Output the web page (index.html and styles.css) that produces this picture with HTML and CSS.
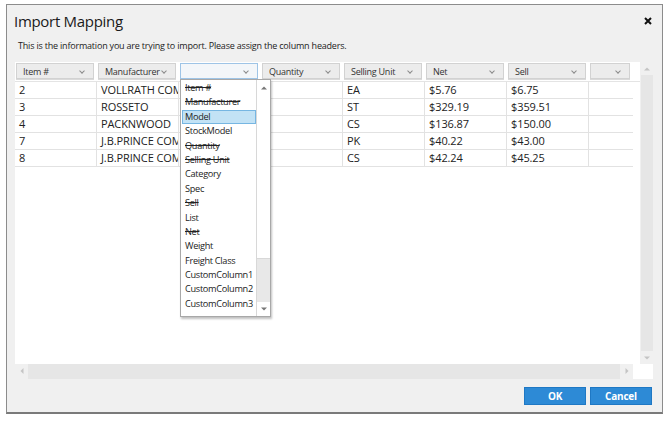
FILE: index.html
```html
<!DOCTYPE html>
<html lang="en">
<head>
    <meta charset="UTF-8">
    <title>Import Mapping</title>
    <link rel="stylesheet" href="styles.css">
</head>
<body>
<div class="dialog">
    <div class="dialog-head">
        <h1 class="dialog-title">Import Mapping</h1>
        <button class="close-btn" aria-label="Close">
            <svg width="8" height="8" viewBox="0 0 8 8"><path d="M1 1L7 7M7 1L1 7" stroke="#111" stroke-width="2"/></svg>
        </button>
    </div>
    <p class="intro">This is the information you are trying to import. Please assign the column headers.</p>

    <div class="grid">
        <div class="grid-body">
            <div class="row head-row">
                <div class="col"><div class="head-cell">Item #<span class="chev"></span></div></div>
                <div class="col"><div class="head-cell">Manufacturer<span class="chev"></span></div></div>
                <div class="col"><div class="head-cell active"><span class="chev"></span></div></div>
                <div class="col"><div class="head-cell">Quantity<span class="chev"></span></div></div>
                <div class="col"><div class="head-cell">Selling Unit<span class="chev"></span></div></div>
                <div class="col"><div class="head-cell">Net<span class="chev"></span></div></div>
                <div class="col"><div class="head-cell">Sell<span class="chev"></span></div></div>
                <div class="col"><div class="head-cell">&nbsp;<span class="chev"></span></div></div>
            </div>
            <div class="row"><div class="cell">2</div><div class="cell">VOLLRATH COMPANY</div><div class="cell"></div><div class="cell"></div><div class="cell">EA</div><div class="cell">$5.76</div><div class="cell">$6.75</div><div class="cell"></div></div>
            <div class="row"><div class="cell">3</div><div class="cell">ROSSETO</div><div class="cell"></div><div class="cell"></div><div class="cell">ST</div><div class="cell">$329.19</div><div class="cell">$359.51</div><div class="cell"></div></div>
            <div class="row"><div class="cell">4</div><div class="cell">PACKNWOOD</div><div class="cell"></div><div class="cell"></div><div class="cell">CS</div><div class="cell">$136.87</div><div class="cell">$150.00</div><div class="cell"></div></div>
            <div class="row"><div class="cell">7</div><div class="cell">J.B.PRINCE COMPANY</div><div class="cell"></div><div class="cell"></div><div class="cell">PK</div><div class="cell">$40.22</div><div class="cell">$43.00</div><div class="cell"></div></div>
            <div class="row"><div class="cell">8</div><div class="cell">J.B.PRINCE COMPANY</div><div class="cell"></div><div class="cell"></div><div class="cell">CS</div><div class="cell">$42.24</div><div class="cell">$45.25</div><div class="cell"></div></div>

            <!-- open column picker -->
            <div class="picker">
                <ul class="picker-list">
                    <li class="used">Item #</li>
                    <li class="used">Manufacturer</li>
                    <li class="selected">Model</li>
                    <li>StockModel</li>
                    <li class="used">Quantity</li>
                    <li class="used">Selling Unit</li>
                    <li>Category</li>
                    <li>Spec</li>
                    <li class="used">Sell</li>
                    <li>List</li>
                    <li class="used">Net</li>
                    <li>Weight</li>
                    <li>Freight Class</li>
                    <li>CustomColumn1</li>
                    <li>CustomColumn2</li>
                    <li>CustomColumn3</li>
                </ul>
                <div class="picker-scroll">
                    <span class="arrow up"></span>
                    <span class="thumb"></span>
                    <span class="track"></span>
                    <span class="arrow down"></span>
                </div>
            </div>
        </div>
        <div class="vscroll">
            <span class="arrow up"></span>
            <span class="track"></span>
            <span class="arrow down"></span>
        </div>
        <div class="hscroll">
            <span class="arrow left"></span>
            <span class="track"></span>
            <span class="arrow right"></span>
            <span class="filler"></span>
        </div>
        <div class="corner"></div>
    </div>

    <div class="dialog-foot">
        <button class="btn">OK</button>
        <button class="btn">Cancel</button>
    </div>
</div>
</body>
</html>
```

FILE: styles.css
```css
* {
    box-sizing: border-box;
}

body {
    margin: 0;
    background: #fff;
    font-family: "Open Sans", "Noto Sans", sans-serif;
    font-size: 11px;
    color: #222;
}

/* Dialog frame */
.dialog {
    margin: 4px 0 0 6px;
    width: 657px;
    height: 410px;
    background: #f0f0f0;
    border: 1px solid #8c8c8c;
    border-bottom: 2px solid #7a7a7a;
    display: flex;
    flex-direction: column;
}

.dialog-head {
    height: 31px;
    display: flex;
    align-items: center;
    justify-content: space-between;
    padding: 0 10px 0 7px;
}

.dialog-title {
    margin: 0;
    font-size: 15px;
    font-weight: normal;
    color: #1a1a1a;
    letter-spacing: -0.3px;
}

.close-btn {
    background: none;
    border: none;
    padding: 0;
    width: 8px;
    height: 8px;
    display: flex;
}

.intro {
    margin: 2px 0 0 11px;
    height: 15px;
    line-height: 15px;
    font-size: 9px;
    letter-spacing: -0.2px;
    color: #222;
}

/* Data grid */
.grid {
    margin: 9px 0 0 8px;
    width: 638px;
    height: 317px;
    display: grid;
    grid-template-columns: 1fr 13px;
    grid-template-rows: 1fr 15px;
}

.grid-body {
    position: relative;
    background: #fff;
    overflow: hidden;
}

.row {
    display: grid;
    grid-template-columns: repeat(7, 82px) 44px;
    height: 17px;
}

.head-row {
    height: 20px;
    padding-top: 1px;
    border-bottom: 1px solid #e4e4e4;
}

.col {
    padding: 0 3px 0 1px;
}

.head-cell {
    position: relative;
    height: 16px;
    line-height: 15px;
    padding-left: 6px;
    background: #ececec;
    border: 1px solid #d2d2d2;
    box-shadow: 0 1px 0 #dadada;
    color: #333;
    font-size: 9px;
    letter-spacing: -0.25px;
    white-space: nowrap;
    overflow: hidden;
}

.head-cell.active {
    background: #f3f6f9;
    border-color: #9ec4e6;
}

.chev {
    position: absolute;
    right: 9px;
    top: 5px;
    width: 4px;
    height: 4px;
    border-right: 1px solid #8a8a8a;
    border-bottom: 1px solid #8a8a8a;
    transform: rotate(45deg);
}

.cell {
    height: 17px;
    line-height: 16px;
    padding-left: 4px;
    border-right: 1px solid #e2e2e2;
    border-bottom: 1px solid #e2e2e2;
    white-space: nowrap;
    overflow: hidden;
    font-size: 11px;
    letter-spacing: -0.1px;
}

.cell:last-child {
    border-right: none;
}

/* Column picker dropdown */
.picker {
    position: absolute;
    left: 165px;
    top: 17px;
    width: 91px;
    height: 238px;
    background: #fff;
    border: 1px solid #a8a8a8;
    box-shadow: 1px 2px 2px rgba(0, 0, 0, 0.25);
    display: flex;
}

.picker-list {
    list-style: none;
    margin: 0;
    padding: 1px 0 0 1px;
    flex: 1;
    overflow: hidden;
}

.picker-list li {
    height: 14.4px;
    line-height: 14px;
    padding-left: 3px;
    font-size: 9.2px;
    letter-spacing: -0.3px;
    color: #222;
    white-space: nowrap;
}

.picker-list li.used {
    text-decoration: line-through;
}

.picker-list li.selected {
    background: #c2e2f5;
    border: 1px solid #76b6e2;
    padding-left: 2px;
    line-height: 12px;
}

.picker-scroll {
    width: 14px;
    display: flex;
    flex-direction: column;
    border-left: 1px solid #d8d8d8;
}

.picker-scroll .thumb {
    height: 164px;
    background: #fff;
    border-bottom: 1px solid #d8d8d8;
}

.picker-scroll .track {
    flex: 1;
    background: #e8e8e8;
}

/* Scrollbars */
.vscroll {
    display: flex;
    flex-direction: column;
    background: #f0f0f0;
}

.vscroll .track {
    flex: 1;
    background: #e6e6e6;
    margin-left: 1px;
}

.hscroll {
    display: flex;
    background: #f0f0f0;
}

.hscroll .track {
    flex: 1;
    background: #e6e6e6;
}

.hscroll .filler {
    width: 7px;
    background: #fff;
}

.corner {
    background: #fff;
}

.arrow {
    position: relative;
    flex: none;
    width: 13px;
    height: 13px;
}

.vscroll .arrow,
.picker-scroll .arrow {
    width: auto;
}

.arrow::after {
    content: "";
    position: absolute;
    left: 50%;
    top: 50%;
    border: 3px solid transparent;
}

.arrow.up::after {
    border-bottom-color: #c4c4c4;
    border-top-width: 0;
    transform: translate(-50%, -50%);
}

.arrow.down::after {
    border-top-color: #c4c4c4;
    border-bottom-width: 0;
    transform: translate(-50%, -50%);
}

.arrow.left::after {
    border-right-color: #c4c4c4;
    border-left-width: 0;
    transform: translate(-50%, -50%);
}

.arrow.right::after {
    border-left-color: #c4c4c4;
    border-right-width: 0;
    transform: translate(-50%, -50%);
}

.picker-scroll .arrow.up::after {
    border-bottom-color: #777;
}

.picker-scroll .arrow.down::after {
    border-top-color: #777;
}

.picker-scroll .arrow.up {
    height: 15px;
}

.picker-scroll .arrow.down {
    height: 14px;
}

/* Footer buttons */
.dialog-foot {
    display: flex;
    justify-content: flex-end;
    gap: 4px;
    padding: 8px 10px 0 0;
}

.btn {
    width: 62px;
    height: 18px;
    padding: 0;
    background: #2d8ad6;
    border: 1px solid #1f78c4;
    color: #fff;
    font-family: "Open Sans", "Noto Sans", sans-serif;
    font-size: 10px;
    font-weight: bold;
    letter-spacing: -0.2px;
}
```
